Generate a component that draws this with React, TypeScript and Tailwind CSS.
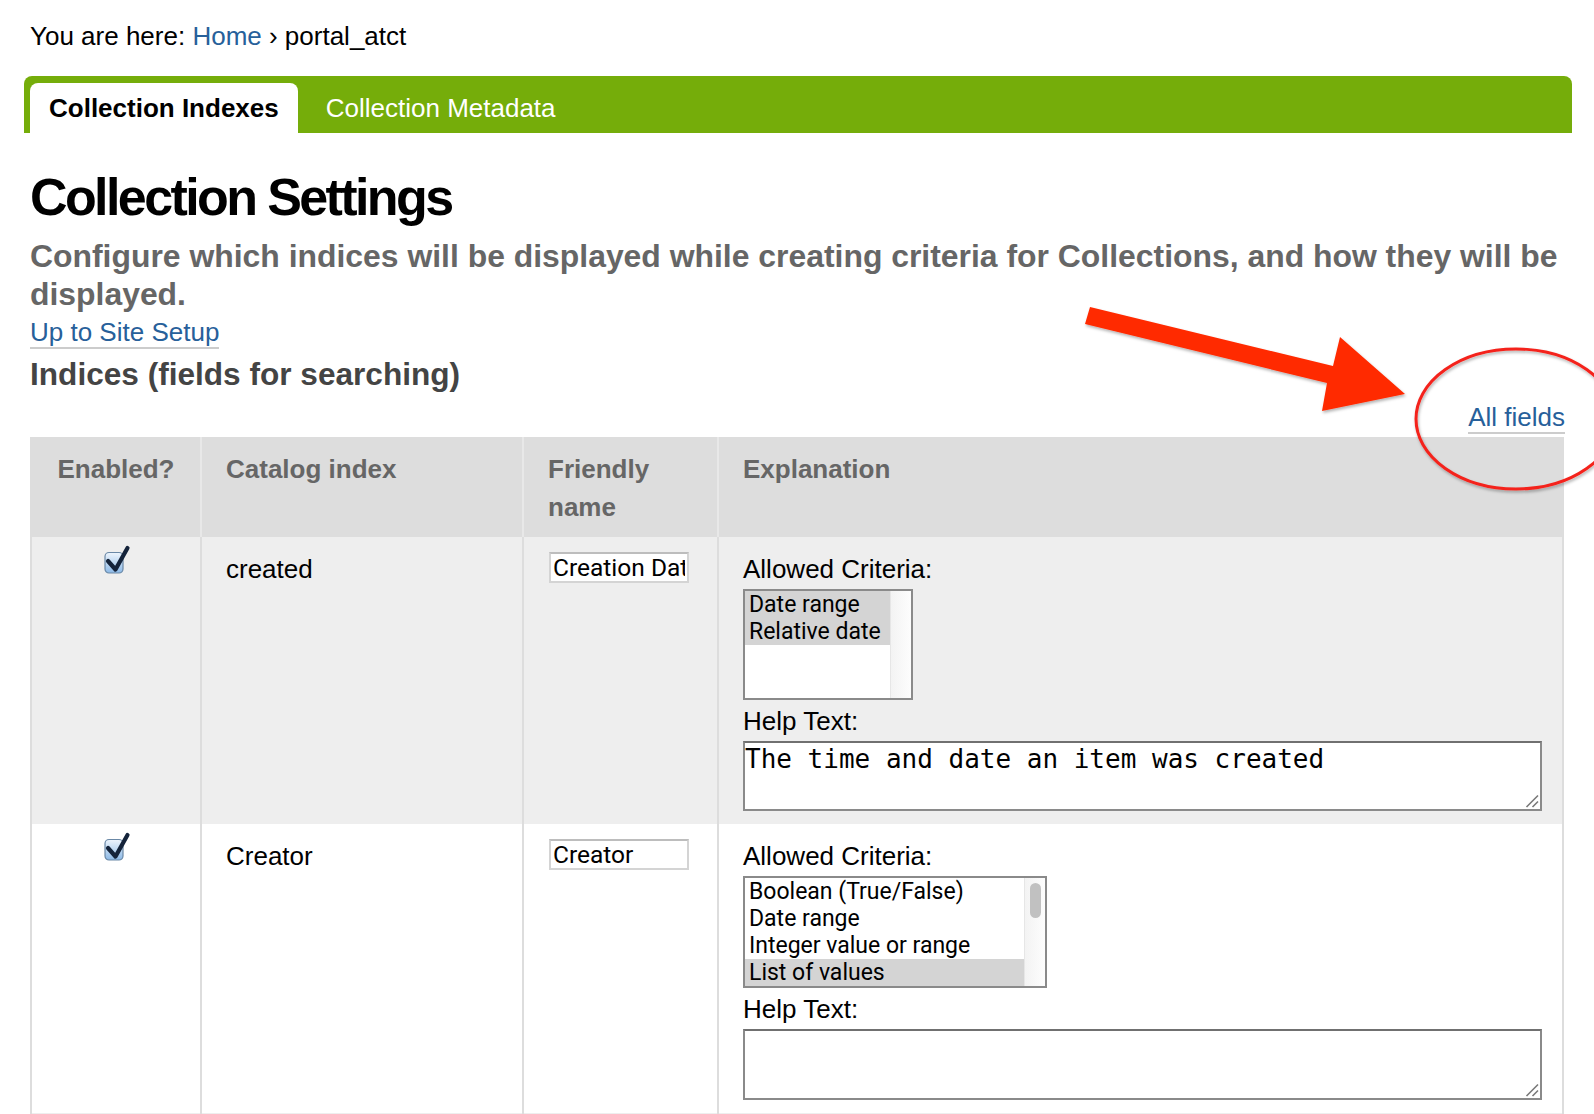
import React from "react";

type Row = {
  index: string;
  friendly: string;
  criteria: { label: string; selected: boolean }[];
  listWidth: number;
  listHeight: number;
  thumb: boolean;
  help: string;
  helpHeight: number;
  bg: string;
};

const rows: Row[] = [
  {
    index: "created",
    friendly: "Creation Date",
    criteria: [
      { label: "Date range", selected: true },
      { label: "Relative date", selected: true },
    ],
    listWidth: 170,
    listHeight: 111,
    thumb: false,
    help: "The time and date an item was created",
    helpHeight: 70,
    bg: "bg-[#eeeeee]",
  },
  {
    index: "Creator",
    friendly: "Creator",
    criteria: [
      { label: "Boolean (True/False)", selected: false },
      { label: "Date range", selected: false },
      { label: "Integer value or range", selected: false },
      { label: "List of values", selected: true },
    ],
    listWidth: 304,
    listHeight: 112,
    thumb: true,
    help: "",
    helpHeight: 71,
    bg: "bg-white",
  },
];

const Checkbox = () => (
  <svg width="28" height="32" viewBox="0 0 28 32">
    <defs>
      <linearGradient id="cbfill" x1="0" y1="0" x2="0" y2="1">
        <stop offset="0" stopColor="#eef5fd" />
        <stop offset="0.45" stopColor="#c3dbf3" />
        <stop offset="1" stopColor="#8bb8e6" />
      </linearGradient>
    </defs>
    <rect x="2" y="8.5" width="18" height="20.5" rx="4" fill="url(#cbfill)" stroke="#6a88a6" strokeWidth="1.2" />
    <path d="M5 17 L12.5 25.5 L24.5 4" fill="none" stroke="#14233a" strokeWidth="4.2" strokeLinejoin="round" strokeLinecap="round" />
  </svg>
);

const ListBox = ({ row }: { row: Row }) => (
  <div
    className="flex border-2 border-[#8a8a8a] bg-white"
    style={{ width: row.listWidth, height: row.listHeight }}
  >
    <div className="flex-1 font-['Roboto',sans-serif] text-[23px] leading-[27px] text-black">
      {row.criteria.map((c) => (
        <div key={c.label} className={`px-[4px] whitespace-nowrap ${c.selected ? "bg-[#d4d4d4]" : ""}`}>
          {c.label}
        </div>
      ))}
    </div>
    <div className="w-[21px] border-l border-[#e6e6e6] bg-gradient-to-r from-[#f3f3f3] to-[#fdfdfd] pt-[5px]">
      {row.thumb && <div className="mx-auto h-[35px] w-[11px] rounded-full bg-[#c1c1c1]" />}
    </div>
  </div>
);

export default function App() {
  return (
    <div className="relative min-h-screen w-full overflow-hidden bg-white font-['Liberation_Sans',Arial,sans-serif] text-black">
      <div className="pl-[30px] pr-[29px] pt-[17px]">
        <div className="text-[26px] leading-[38px]">
          You are here: <a className="text-[#27609a]">Home</a> › portal_atct
        </div>

        <div className="-ml-[6px] -mr-[7px] mt-[21px] flex h-[57px] items-end rounded-t-[8px] bg-[#75ad0a] px-[6px]">
          <div className="flex h-[50px] items-center rounded-t-[8px] bg-white px-[19px] text-[26px] font-bold">
            Collection Indexes
          </div>
          <div className="ml-[8px] flex h-[50px] items-center px-[20px] text-[26px] text-white">
            Collection Metadata
          </div>
        </div>

        <h1 className="mt-[34px] text-[52px] font-bold leading-[60px] tracking-[-2.6px]">Collection Settings</h1>
        <p className="mt-[10px] text-[31.9px] font-bold leading-[38px] text-[#666666]">
          Configure which indices will be displayed while creating criteria for Collections, and how they will be
          displayed.
        </p>
        <div className="text-[26px] leading-[38px]">
          <a className="border-b-2 border-[#cccccc] text-[#27609a]">Up to Site Setup</a>
        </div>
        <h2 className="mt-[4px] text-[31.6px] font-bold leading-[38px] text-[#444444]">Indices (fields for searching)</h2>
        <div className="mt-[5px] text-right text-[26px] leading-[38px]">
          <a className="border-b-2 border-[#cccccc] text-[#27609a]">All fields</a>
        </div>

        <div className="mr-[1px] mt-[1px] border-x-2 border-[#dddddd] text-[26px]">
          <div className="grid grid-cols-[168px_322px_195px_1fr] bg-[#dddddd] font-bold leading-[38px] text-[#666666]">
            <div className="pb-[11px] pt-[13px] text-center">Enabled?</div>
            <div className="border-l-2 border-[#e8e8e8] px-[24px] pb-[11px] pt-[13px]">Catalog index</div>
            <div className="border-l-2 border-[#e8e8e8] px-[24px] pb-[11px] pt-[13px]">Friendly name</div>
            <div className="border-l-2 border-[#e8e8e8] px-[24px] pb-[11px] pt-[13px]">Explanation</div>
          </div>

          {rows.map((row) => (
            <div key={row.index} className={`grid grid-cols-[168px_322px_195px_1fr] ${row.bg}`}>
              <div className="flex justify-center pl-[2px] pt-[7px]">
                <Checkbox />
              </div>
              <div className="border-l-2 border-[#dddddd] px-[24px] pt-[13px] leading-[38px]">{row.index}</div>
              <div className="border-l-2 border-[#dddddd] pl-[25px] pt-[11px]">
                <input
                  defaultValue={row.friendly}
                  className="h-[31px] w-[140px] border-2 border-[#d4d4d4] border-t-[#bdbdbd] bg-white px-[2px] font-['Roboto',sans-serif] text-[24.5px] leading-[27px] text-black outline-none"
                />
              </div>
              <div className="border-l-2 border-[#dddddd] pb-[13px] pl-[24px] pr-[20px] pt-[13px]">
                <div className="leading-[38px]">Allowed Criteria:</div>
                <div className="mt-[1px]">
                  <ListBox row={row} />
                </div>
                <div className="mt-[2px] leading-[38px]">Help Text:</div>
                <div className="relative mt-[1px]">
                  <textarea
                    defaultValue={row.help}
                    className="block w-full resize-none border-2 border-[#8a8a8a] border-t-[#707070] bg-white px-0 pb-0 pt-[1px] font-['DejaVu_Sans_Mono',monospace] text-[26px] leading-[30px] text-black outline-none"
                    style={{ height: row.helpHeight }}
                  />
                  <svg className="absolute bottom-[3px] right-[3px]" width="14" height="14" viewBox="0 0 14 14">
                    <path d="M1.5 13 L13 1.5 M7.5 13 L13 7.5" stroke="#7a7a7a" strokeWidth="1.6" />
                  </svg>
                </div>
              </div>
            </div>
          ))}

          <div className="grid h-[40px] grid-cols-[168px_322px_195px_1fr] bg-[#eeeeee]">
            <div />
            <div className="border-l-2 border-[#dddddd]" />
            <div className="border-l-2 border-[#dddddd]" />
            <div className="border-l-2 border-[#dddddd]" />
          </div>
        </div>
      </div>

      {/* red annotation drawn over the page */}
      <svg className="pointer-events-none absolute left-0 top-0" width="1594" height="1114" viewBox="0 0 1594 1114">
        <defs>
          <filter id="shadow" x="-10%" y="-10%" width="120%" height="130%">
            <feDropShadow dx="1" dy="2" stdDeviation="1.5" floodColor="#000" floodOpacity="0.3" />
          </filter>
        </defs>
        <polygon
          points="1090,307 1333,366 1340,337 1405,394 1322,411 1327,383 1085,324"
          fill="#ff2a06"
          filter="url(#shadow)"
        />
        <ellipse cx="1516" cy="419" rx="100" ry="70" fill="none" stroke="#f4221a" strokeWidth="3" filter="url(#shadow)" />
      </svg>
    </div>
  );
}
